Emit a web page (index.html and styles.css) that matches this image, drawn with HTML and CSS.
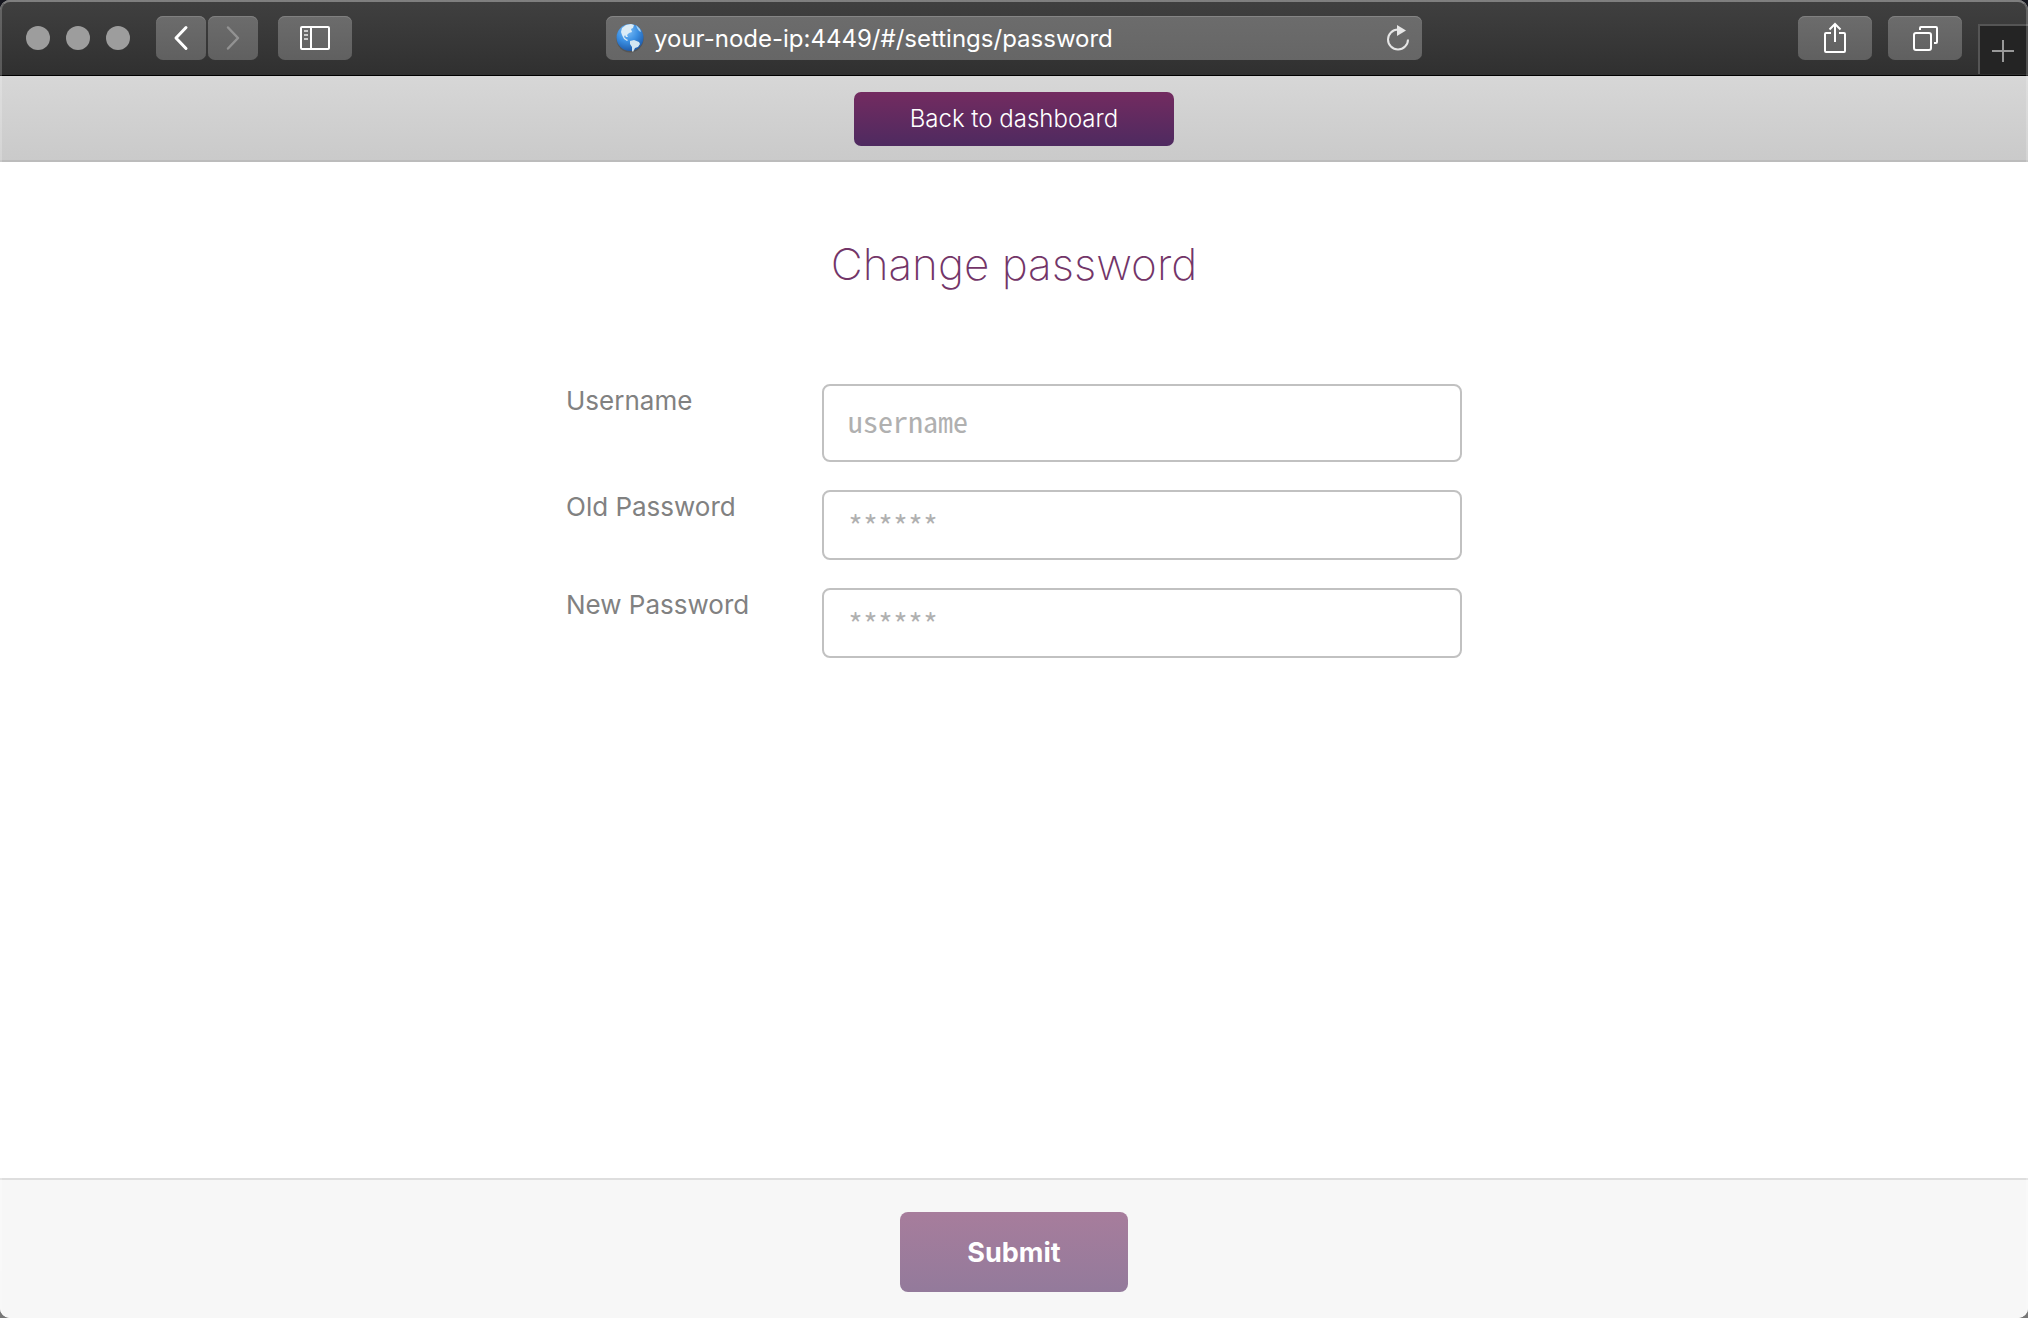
FILE: index.html
```html
<!DOCTYPE html>
<html lang="en">
<head>
<meta charset="utf-8">
<title>Change password</title>
<link rel="stylesheet" href="styles.css">
</head>
<body>
<div class="window">
  <div class="chrome">
    <div class="chrome-left">
      <div class="lights"><span class="light"></span><span class="light"></span><span class="light"></span></div>
      <div class="history">
        <button class="tool tool-small" type="button" aria-label="Back">
          <svg width="16" height="26" viewBox="0 0 16 26"><path d="M13 2.5 3 13 13 23.5" fill="none" stroke="#fff" stroke-width="3" stroke-linecap="round" stroke-linejoin="round"/></svg>
        </button>
        <button class="tool tool-small" type="button" aria-label="Forward" disabled>
          <svg width="16" height="26" viewBox="0 0 16 26"><path d="M3 2.5 13 13 3 23.5" fill="none" stroke="#929292" stroke-width="2.5" stroke-linecap="round" stroke-linejoin="round"/></svg>
        </button>
      </div>
      <button class="tool" type="button" aria-label="Show sidebar">
        <svg width="30" height="24" viewBox="0 0 30 24"><rect x="1" y="1" width="28" height="22" rx="1" fill="none" stroke="#fff" stroke-width="2"/><path d="M11 1v22" stroke="#fff" stroke-width="2"/><path d="M4 5h4M4 9h4M4 13h4" stroke="#ccc" stroke-width="2"/></svg>
      </button>
    </div>
    <div class="address">
      <svg width="28" height="30" viewBox="0 0 28 30">
        <defs><radialGradient id="sea" cx=".4" cy=".25" r=".8"><stop offset="0" stop-color="#7fc0f7"/><stop offset=".5" stop-color="#3b8fe2"/><stop offset="1" stop-color="#1b55a4"/></radialGradient></defs>
        <circle cx="14" cy="16" r="13.5" fill="#333" opacity=".35"/>
        <circle cx="14" cy="14.500" r="13.500" fill="url(#sea)"/>
        <path d="M6 5 10 2l5-1 3 1-1 3-2 1 1 3-3 1-2 2 1 2-2 0-1-2-1 2 2 2 2 1-1 1-3-2-2-4-1-3z" fill="#dcecf6"/>
        <path d="m14 18 4-1 5 2 1 2-2 3-3 1-2 4-1-1v-4l-2-3z" fill="#d3e6f2"/>
        <path d="m20 2 4 4 1 3-2-1-2-3z" fill="#a8d4f5"/>
      </svg>
      <input class="url" type="text" aria-label="Address" value="your-node-ip:4449/#/settings/password">
      <button class="reload" type="button" aria-label="Reload">
        <svg width="24" height="28" viewBox="0 0 24 28"><path d="M12 5.500a10 10 0 1 0 10 10" fill="none" stroke="#e6e6e6" stroke-width="2"/><path d="M11 1v11l9-5.500z" fill="#e6e6e6"/></svg>
      </button>
    </div>
    <div class="chrome-right">
      <button class="tool" type="button" aria-label="Share">
        <svg width="24" height="32" viewBox="0 0 24 32"><path d="M8 11H3a1 1 0 0 0-1 1v17a1 1 0 0 0 1 1h18a1 1 0 0 0 1-1V12a1 1 0 0 0-1-1h-5M12 20V2M6.500 7.500 12 2l5.500 5.500" fill="none" stroke="#fff" stroke-width="2"/></svg>
      </button>
      <button class="tool" type="button" aria-label="Show all tabs">
        <svg width="26" height="26" viewBox="0 0 26 26"><rect x="2" y="8" width="17" height="17" rx="2" fill="none" stroke="#fff" stroke-width="2"/><path d="M8 5V3a1 1 0 0 1 1-1h15a1 1 0 0 1 1 1v14a1 1 0 0 1-1 1h-2" fill="none" stroke="#fff" stroke-width="2"/></svg>
      </button>
      <button class="new-tab" type="button" aria-label="New tab">
        <svg width="22" height="22" viewBox="0 0 22 22"><path d="M11 0v22M0 11h22" stroke="#999" stroke-width="2"/></svg>
      </button>
    </div>
  </div>
  <header class="header"><a class="back" href="#/">Back to dashboard</a></header>
  <form class="form">
    <main class="main">
      <h1 class="title">Change password</h1>
      <div class="fields">
        <label class="label" for="username">Username</label>
        <input class="field field-tall" id="username" type="text" placeholder="username">
        <label class="label" for="old">Old Password</label>
        <input class="field" id="old" type="password" placeholder="******">
        <label class="label" for="new">New Password</label>
        <input class="field" id="new" type="password" placeholder="******">
      </div>
    </main>
    <footer class="footer"><button class="submit" type="submit">Submit</button></footer>
  </form>
</div>
</body>
</html>
```
FILE: styles.css
```css
* { box-sizing: border-box; }
body {
  margin: 0;
  background: linear-gradient(#15161e 50%, #777 50%);
  font-family: Inter, "Liberation Sans", sans-serif;
}
button, input { font: inherit; border: 0; margin: 0; padding: 0; }
svg { display: block; flex: none; }
.window {
  position: relative;
  display: flex;
  flex-direction: column;
  min-height: 100vh;
  background: #fff;
  border-radius: 10px;
  overflow: hidden;
}
/* light rim round the window */
.window::after {
  content: "";
  position: absolute;
  inset: 0;
  border: 2px solid rgba(255, 255, 255, .2);
  border-top-color: rgba(255, 255, 255, .33);
  border-bottom: 0;
  border-radius: 10px;
  pointer-events: none;
}
.chrome {
  display: grid;
  grid-template-columns: 1fr minmax(0, 816px) 1fr;
  height: 76px;
  padding-top: 16px;
  background: linear-gradient(#404040, #303030);
  border-bottom: 1px solid #000;
}
.chrome-left { display: flex; gap: 20px; padding-left: 26px; height: 44px; }
.lights { display: flex; align-items: center; gap: 16px; margin-right: 6px; }
.light { width: 24px; height: 24px; border-radius: 50%; background: #9d9d9d; }
.history { display: flex; gap: 2px; }
.tool {
  display: flex;
  align-items: center;
  justify-content: center;
  width: 74px;
  height: 44px;
  border-radius: 7px;
  background: linear-gradient(#6c6c6c, #606060);
  box-shadow: inset 0 1px #808080;
}
.tool-small { width: 50px; }
.address {
  display: flex;
  align-items: center;
  gap: 10px;
  height: 44px;
  padding: 0 12px 0 10px;
  border-radius: 7px;
  background: linear-gradient(#6c6c6c, #666);
  box-shadow: inset 0 1px #858585;
}
.url {
  flex: 1;
  min-width: 0;
  padding-top: 2px;
  background: none;
  color: #fff;
  font-size: 24px;
  line-height: 32px;
}
.reload { background: none; }
.chrome-right { display: flex; justify-content: flex-end; gap: 16px; }
.new-tab {
  display: flex;
  align-items: center;
  justify-content: center;
  width: 50px;
  height: 50px;
  margin-top: 8px;
  padding: 2px 2px 0 0;
  background: #242424;
  border: solid #555;
  border-width: 2px 0 0 2px;
}
.header {
  display: flex;
  align-items: center;
  justify-content: center;
  height: 86px;
  padding-top: 2px;
  background: linear-gradient(#d7d7d7, #cacaca);
  border-bottom: 2px solid #bcbcbc;
}
.back {
  width: 320px;
  border-radius: 7px;
  background: linear-gradient(#732b60, #4e2a60);
  color: #fff;
  font-size: 24px;
  font-weight: 300;
  line-height: 54px;
  text-align: center;
  text-decoration: none;
}
.form { flex: 1; display: flex; flex-direction: column; }
.main { flex: 1; padding: 70px 20px; }
.title {
  margin: 0 0 88px;
  color: #733568;
  font-size: 44px;
  font-weight: 200;
  line-height: 64px;
  text-align: center;
}
.fields {
  display: grid;
  grid-template-columns: 256px 1fr;
  row-gap: 28px;
  max-width: 896px;
  margin: 0 auto;
}
.label { color: #818181; font-size: 26px; line-height: 34px; }
.field {
  width: 100%;
  height: 70px;
  padding: 0 24px;
  border: 2px solid #c1c1c1;
  border-radius: 8px;
  background: #fff;
  font-family: "Noto Sans Mono CJK JP", "Liberation Mono", monospace;
  font-size: 30px;
}
.field-tall { height: 78px; padding-bottom: 6px; }
.field::placeholder { color: #b0b0b0; }
.footer {
  display: flex;
  justify-content: center;
  padding: 32px 0 26px;
  background: #f7f7f7;
  border-top: 2px solid #dedede;
}
.submit {
  width: 228px;
  height: 80px;
  border-radius: 8px;
  background: linear-gradient(#a77d9c, #937a9b);
  color: #fff;
  font-size: 27px;
  font-weight: 700;
}
```
